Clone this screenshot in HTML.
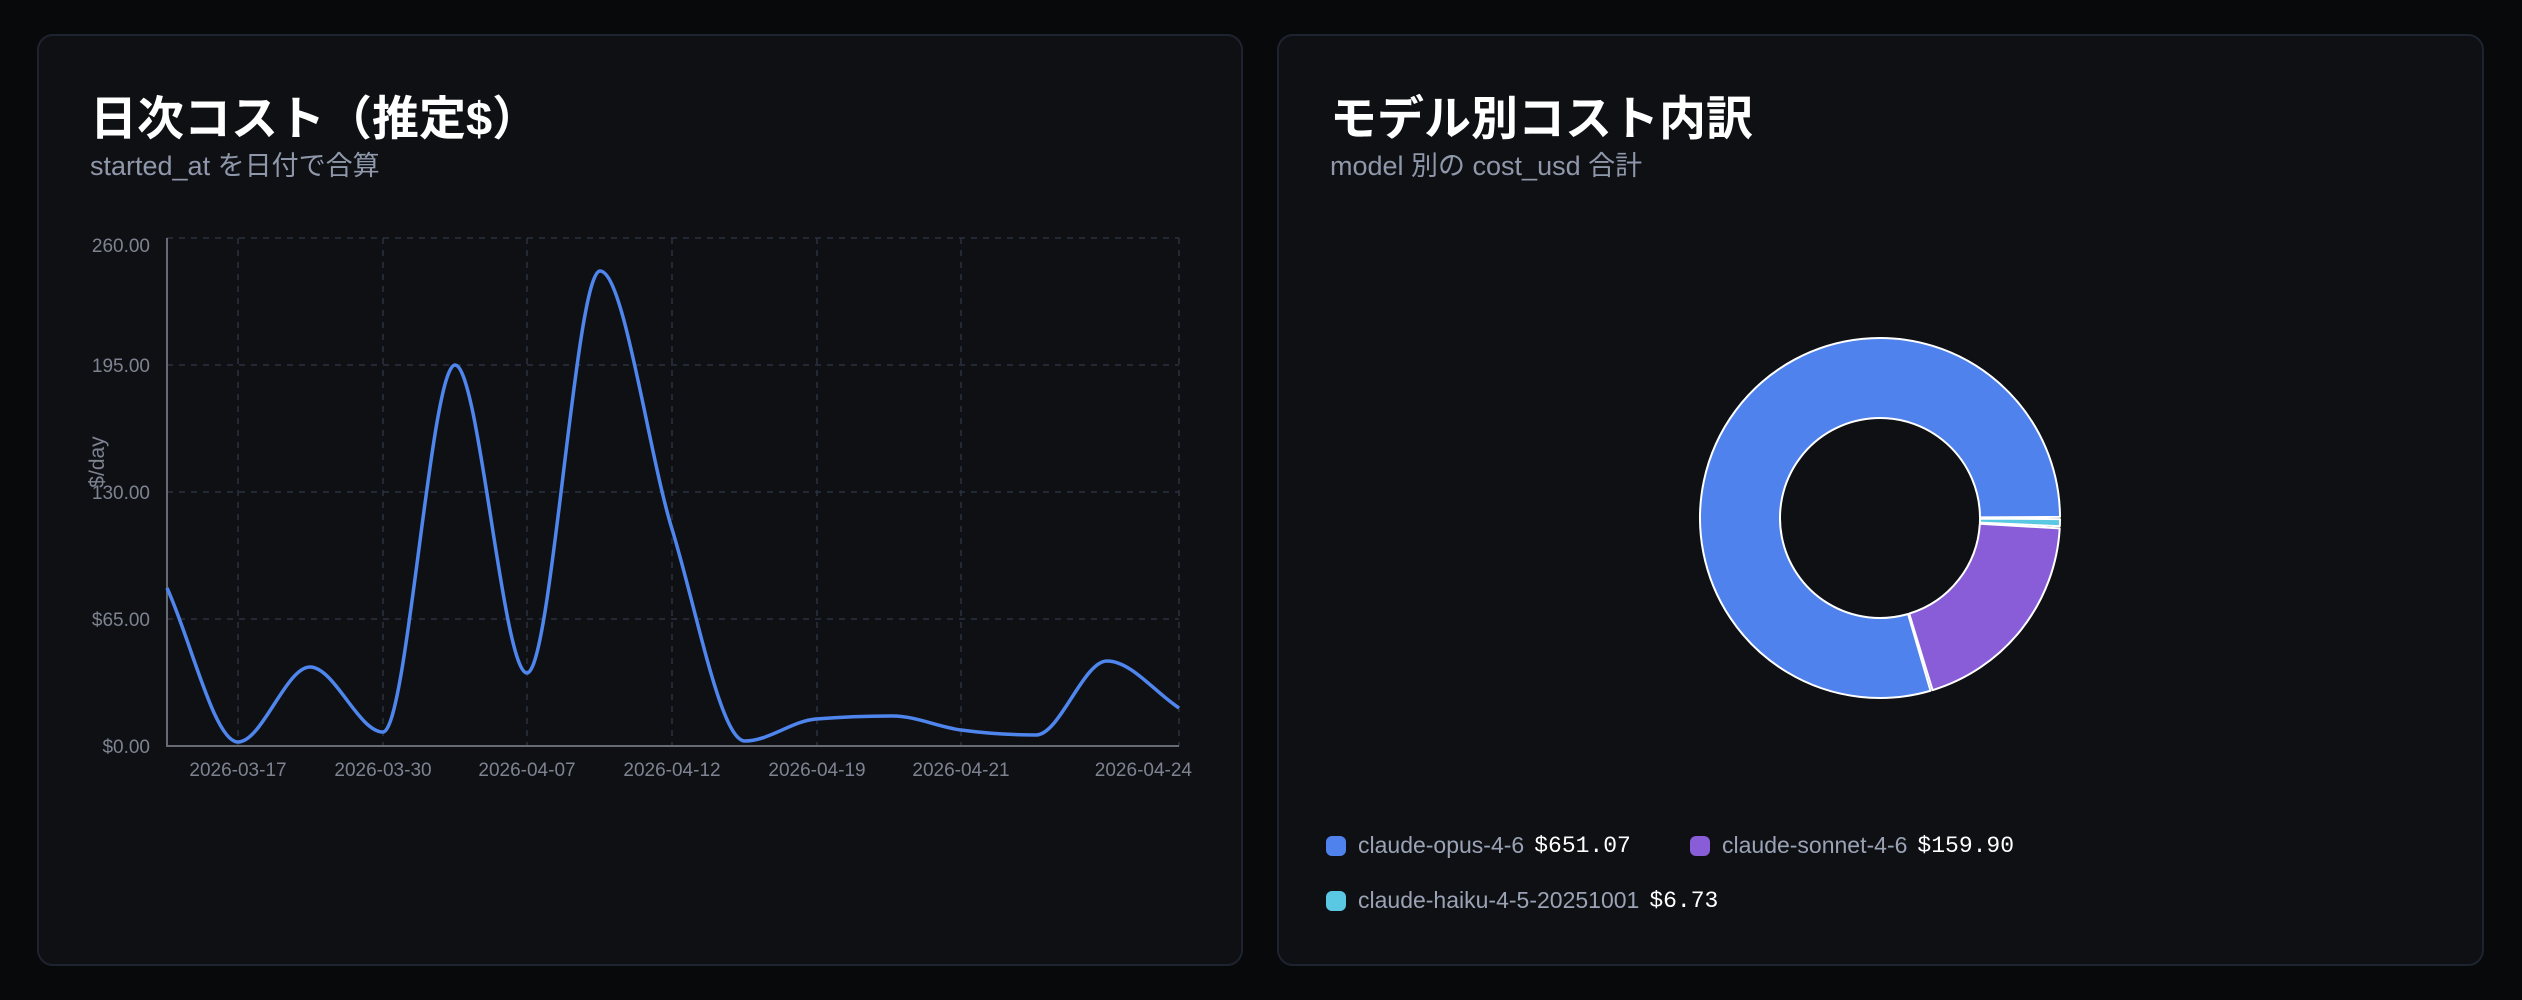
<!DOCTYPE html>
<html><head><meta charset="utf-8">
<style>
html,body{margin:0;padding:0;background:#08090b;width:2522px;height:1000px;overflow:hidden;font-family:"Liberation Sans","Noto Sans CJK JP",sans-serif;}
.card{position:absolute;top:34px;height:932px;background:#0f1014;border:2px solid #1d2330;border-radius:16px;box-sizing:border-box;}
.t{position:absolute;left:51px;top:44px;color:#fff;font-size:47px;font-weight:bold;white-space:nowrap;}
.s{position:absolute;left:51px;top:108px;color:#8f98aa;font-size:27px;white-space:nowrap;}
svg{position:absolute;left:0;top:0;}
.lg{position:absolute;font-size:23px;color:#9aa3b5;white-space:nowrap;display:flex;align-items:center;}
.lg i{display:inline-block;width:20px;height:20px;border-radius:6px;margin-right:12px;}
.lg b{font-family:"Liberation Mono",monospace;font-weight:normal;color:#fff;margin-left:10px;font-size:23px;}
</style></head><body>
<div class="card" style="left:37px;width:1206px;">
  <div class="t">日次コスト（推定$）</div>
  <div class="s">started_at を日付で合算</div>
</div>
<div class="card" style="left:1277px;width:1207px;">
  <div class="t">モデル別コスト内訳</div>
  <div class="s">model 別の cost_usd 合計</div>
</div>
<svg width="2522" height="1000" xmlns="http://www.w3.org/2000/svg">
  <g stroke="#2a3140" stroke-width="1.5" stroke-dasharray="6,6" fill="none">
    <line x1="167" y1="238" x2="1179" y2="238"/>
    <line x1="167" y1="365" x2="1179" y2="365"/>
    <line x1="167" y1="492" x2="1179" y2="492"/>
    <line x1="167" y1="619" x2="1179" y2="619"/>
    <line x1="238" y1="238" x2="238" y2="746"/>
    <line x1="383" y1="238" x2="383" y2="746"/>
    <line x1="527" y1="238" x2="527" y2="746"/>
    <line x1="672" y1="238" x2="672" y2="746"/>
    <line x1="817" y1="238" x2="817" y2="746"/>
    <line x1="961" y1="238" x2="961" y2="746"/>
    <line x1="1179" y1="238" x2="1179" y2="746"/>
  </g>
  <line x1="167" y1="238" x2="167" y2="747" stroke="#666b75" stroke-width="2"/>
  <line x1="166" y1="746" x2="1179" y2="746" stroke="#666b75" stroke-width="2"/>
  <g fill="#7d8391" font-size="19" text-anchor="end" font-family="Liberation Sans, sans-serif">
    <text x="150" y="252">260.00</text>
    <text x="150" y="372">195.00</text>
    <text x="150" y="499">130.00</text>
    <text x="150" y="626">$65.00</text>
    <text x="150" y="753">$0.00</text>
  </g>
  <text transform="translate(104,462) rotate(-90)" fill="#7d8391" font-size="21" text-anchor="middle" font-family="Liberation Sans, sans-serif">$/day</text>
  <g fill="#7d8391" font-size="19" text-anchor="middle" font-family="Liberation Sans, sans-serif">
    <text x="238" y="776">2026-03-17</text>
    <text x="383" y="776">2026-03-30</text>
    <text x="527" y="776">2026-04-07</text>
    <text x="672" y="776">2026-04-12</text>
    <text x="817" y="776">2026-04-19</text>
    <text x="961" y="776">2026-04-21</text>
    <text x="1192" y="776" text-anchor="end">2026-04-24</text>
  </g>
  <path id="curve" fill="none" stroke="#4f86ee" stroke-width="3.5" stroke-linejoin="round" d=""/>
  <g stroke="#ffffff" stroke-width="2" stroke-linejoin="round" id="donut"></g>
</svg>
<div class="lg" style="left:1326px;top:832px;"><i style="background:#4f82ec"></i>claude-opus-4-6<b>$651.07</b></div>
<div class="lg" style="left:1690px;top:832px;"><i style="background:#8a5dd8"></i>claude-sonnet-4-6<b>$159.90</b></div>
<div class="lg" style="left:1326px;top:887px;"><i style="background:#5ac8e2"></i>claude-haiku-4-5-20251001<b>$6.73</b></div>
<script>
(function(){
var P=[[167,588],[238,742],[310,667],[383,732],[455,365],[527,673],[600,271],[672,529],[745,741],[816,719],[893,716],[961,730],[1036,735],[1107,661],[1179,708]];
var n=P.length,m=[],d=[];
for(var i=0;i<n-1;i++){d.push((P[i+1][1]-P[i][1])/(P[i+1][0]-P[i][0]));}
for(var i=0;i<n;i++){
 if(i==0)m.push(d[0]);else if(i==n-1)m.push(d[n-2]);
 else{ if(d[i-1]*d[i]<=0)m.push(0);else{var h0=P[i][0]-P[i-1][0],h1=P[i+1][0]-P[i][0];var s=(d[i-1]*h1+d[i]*h0)/(h0+h1);var mx=2*Math.min(Math.abs(d[i-1]),Math.abs(d[i]));m.push(Math.sign(s)*Math.min(Math.abs(s),mx));}}
}
var s="M"+P[0][0]+","+P[0][1];
for(var i=0;i<n-1;i++){var h=(P[i+1][0]-P[i][0])/3;
 s+=" C"+(P[i][0]+h)+","+(P[i][1]+m[i]*h)+" "+(P[i+1][0]-h)+","+(P[i+1][1]-m[i+1]*h)+" "+P[i+1][0]+","+P[i+1][1];}
document.getElementById('curve').setAttribute('d',s);
var cx=1880,cy=518,R=180,r=100,pad=0.012;
var vals=[651.07,159.90,6.73],cols=['#4f82ec','#8a5dd8','#5ac8e2'],tot=vals[0]+vals[1]+vals[2];
var a=0,g=document.getElementById('donut'),out='';
for(var k=0;k<3;k++){
 var sweep=vals[k]/tot*2*Math.PI;
 var a0=a-pad/2,a1=a-sweep+pad/2; a-=sweep;
 // counterclockwise in screen: angle decreasing
 function pt(rad,an){return (cx+rad*Math.cos(an)).toFixed(2)+","+(cy+rad*Math.sin(an)).toFixed(2);}
 var large=(a0-a1)>Math.PI?1:0;
 out+='<path fill="'+cols[k]+'" d="M'+pt(R,a0)+' A'+R+','+R+' 0 '+large+' 0 '+pt(R,a1)+' L'+pt(r,a1)+' A'+r+','+r+' 0 '+large+' 1 '+pt(r,a0)+' Z"/>';
}
g.innerHTML=out;
})();
</script>
</body></html>
